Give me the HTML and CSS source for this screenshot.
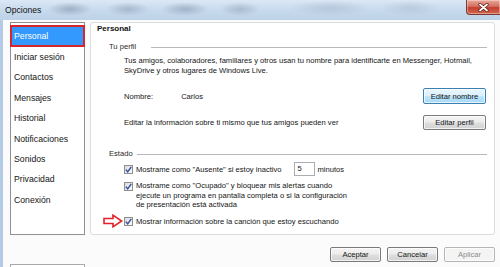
FILE: index.html
```html
<!DOCTYPE html>
<html lang="es">
<head>
<meta charset="utf-8">
<title>Opciones</title>
<link rel="stylesheet" href="styles.css">
</head>
<body>
<div class="window">
  <header class="titlebar">
    <span class="title">Opciones</span>
    <button class="close" aria-label="Cerrar">
      <svg width="11" height="9" viewBox="0 0 11 9"><path d="M2 1.5 L9 7.5 M9 1.5 L2 7.5" stroke="#5a1a14" stroke-width="3.2" stroke-linecap="round"/><path d="M2 1.5 L9 7.5 M9 1.5 L2 7.5" stroke="#fff" stroke-width="1.8" stroke-linecap="round"/></svg>
    </button>
  </header>
  <div class="client">
    <div class="main">
      <ul class="nav">
        <li class="selected">Personal</li>
        <li>Iniciar sesión</li>
        <li>Contactos</li>
        <li>Mensajes</li>
        <li>Historial</li>
        <li>Notificaciones</li>
        <li>Sonidos</li>
        <li>Privacidad</li>
        <li>Conexión</li>
      </ul>
      <section class="panel">
        <h1 class="panel-title">Personal</h1>
        <div class="group-label group-perfil"><span>Tu perfil</span></div>
        <p class="desc">Tus amigos, colaboradores, familiares y otros usan tu nombre para identificarte en Messenger, Hotmail,<br>SkyDrive y otros lugares de Windows Live.</p>
        <div class="row row-name">
          <span class="label">Nombre:</span>
          <span class="value">Carlos</span>
          <button class="btn btn-focus">Editar nombre</button>
        </div>
        <div class="row row-info">
          <span>Editar la información sobre ti mismo que tus amigos pueden ver</span>
          <button class="btn">Editar perfil</button>
        </div>
        <div class="group-label group-estado"><span>Estado</span></div>
        <div class="check-row row-away">
          <span class="check"><svg width="7" height="7" viewBox="0 0 7 7"><path d="M0.8 3.6 L2.7 5.8 L6.3 0.9" fill="none" stroke="#2f4f9e" stroke-width="1.4"/></svg></span>
          <span>Mostrame como &quot;Ausente&quot; si estoy inactivo</span>
          <span class="num">5</span>
          <span>minutos</span>
        </div>
        <div class="check-row row-busy">
          <span class="check"><svg width="7" height="7" viewBox="0 0 7 7"><path d="M0.8 3.6 L2.7 5.8 L6.3 0.9" fill="none" stroke="#2f4f9e" stroke-width="1.4"/></svg></span>
          <span>Mostrame como &quot;Ocupado&quot; y bloquear mis alertas cuando<br>ejecute un programa en pantalla completa o si la configuración<br>de presentación está activada</span>
        </div>
        <div class="check-row row-music">
          <svg class="arrow" width="20" height="14" viewBox="0 0 20 14"><path d="M1 4.5 H10 V1.2 L18.6 7 L10 12.8 V9.5 H1 Z" fill="#fff" stroke="#e3202a" stroke-width="1.6" stroke-linejoin="miter"/></svg>
          <span class="check"><svg width="7" height="7" viewBox="0 0 7 7"><path d="M0.8 3.6 L2.7 5.8 L6.3 0.9" fill="none" stroke="#2f4f9e" stroke-width="1.4"/></svg></span>
          <span>Mostrar información sobre la canción que estoy escuchando</span>
        </div>
      </section>
    </div>
    <div class="actions">
      <button class="btn">Aceptar</button>
      <button class="btn">Cancelar</button>
      <button class="btn btn-disabled">Aplicar</button>
    </div>
    <div class="nav-next"></div>
  </div>
</div>
</body>
</html>
```
FILE: styles.css
```css
html, body {
  margin: 0;
  padding: 0;
}
body {
  width: 500px;
  height: 267px;
  overflow: hidden;
  font-family: "Liberation Sans", Arial, sans-serif;
  font-size: 7.6px;
  color: #141414;
  background: #fbfbfb;
}
.window {
  display: flex;
  flex-direction: column;
  height: 267px;
}
.titlebar {
  height: 20px;
  flex: none;
  display: flex;
  align-items: flex-start;
  background:
    radial-gradient(ellipse 22px 7px at 70px 9px, rgba(120,140,165,0.55), transparent),
    radial-gradient(ellipse 22px 7px at 128px 9px, rgba(120,140,165,0.45), transparent),
    radial-gradient(ellipse 24px 7px at 185px 9px, rgba(120,140,165,0.5), transparent),
    radial-gradient(ellipse 20px 7px at 240px 9px, rgba(120,140,165,0.4), transparent),
    radial-gradient(ellipse 40px 8px at 330px 8px, rgba(140,160,185,0.35), transparent),
    radial-gradient(ellipse 30px 8px at 410px 8px, rgba(140,160,185,0.3), transparent),
    linear-gradient(#dbe7f4, #c5d8ec 60%, #bdd2e8);
}
.title {
  font-size: 8.6px;
  line-height: 20px;
  padding-left: 5px;
  color: #111;
}
.close {
  margin-left: auto;
  width: 34px;
  height: 15px;
  padding: 0;
  border: 1px solid #7a3a32;
  border-top: none;
  border-right: none;
  border-radius: 0 0 0 4px;
  background: linear-gradient(#e9a99a, #d47060 45%, #c2402f 55%, #d4684f);
  display: flex;
  align-items: center;
  justify-content: center;
  box-shadow: inset 0 0 0 1px rgba(255,255,255,0.35);
}
.client {
  flex: 1;
  display: flex;
  flex-direction: column;
  border-left: 3px solid #b3cbe6;
  padding: 2px 5px 0 7px;
  background: #fbfbfb;
}
.main {
  display: flex;
  gap: 5px;
  height: 213px;
  flex: none;
}
.nav {
  width: 75px;
  box-sizing: border-box;
  margin: 0;
  padding: 2px 0 0;
  list-style: none;
  border: 1px solid #8d9094;
  background: #fff;
  font-size: 8.7px;
}
.nav li {
  height: 20.4px;
  line-height: 20.4px;
  padding-left: 3px;
  color: #141414;
  white-space: nowrap;
}
.nav li.selected {
  box-sizing: border-box;
  height: 22px;
  line-height: 18px;
  margin: 0 -1px;
  padding-left: 2px;
  border: 2px solid #d6252d;
  background: #3399ff;
  color: #fff;
}
.panel {
  flex: 1;
  box-sizing: border-box;
  border: 1px solid #dcdcdc;
  border-radius: 3px;
  background: #fff;
  padding: 1px 7px 0 6px;
}
.panel-title {
  margin: 0;
  font-size: 8px;
  font-weight: bold;
  line-height: 10px;
  color: #111;
}
.group-label {
  display: flex;
  align-items: center;
  gap: 4px;
  margin-left: 12px;
  line-height: 10px;
  color: #2a2a2a;
}
.group-label::after {
  content: "";
  flex: 1;
  border-top: 1px solid #b9b9b9;
}
.group-perfil {
  margin-top: 8px;
  gap: 15px;
}
.group-estado {
  margin-top: 19px;
}
.desc {
  margin: 4px 0 0 27px;
  line-height: 9.5px;
}
.row {
  display: flex;
  align-items: center;
  margin-left: 27px;
  padding-right: 1px;
}
.row .btn {
  margin-left: auto;
  width: 63px;
}
.row-name {
  margin-top: 13px;
  height: 16px;
}
.row-name .btn {
  height: 16px;
}
.row-name .value {
  margin-left: 28px;
}
.row-info {
  margin-top: 11px;
  height: 15px;
}
.btn {
  box-sizing: border-box;
  height: 15px;
  padding: 0;
  font-family: inherit;
  font-size: 7.6px;
  color: #141414;
  border: 1px solid #7a7a7a;
  border-radius: 2px;
  background: linear-gradient(#f4f4f4, #ececec 48%, #dedede 52%, #d2d2d2);
  box-shadow: inset 0 0 0 1px rgba(255,255,255,0.7);
}
.btn-focus {
  border-color: #3c7fb1;
  background: linear-gradient(#eaf6fd, #d9f0fc 48%, #bee6fd 52%, #a7d9f5);
}
.btn-disabled {
  color: #8c8c8c;
  border-color: #b5b5b5;
  background: #f4f4f4;
}
.check-row {
  display: flex;
  align-items: center;
  margin-left: 27px;
  gap: 3px;
}
.check {
  box-sizing: border-box;
  width: 9px;
  height: 9px;
  flex: none;
  border: 1px solid #8f8f8f;
  background: linear-gradient(135deg, #dcdcdc, #fafafa);
  display: flex;
  align-items: center;
  justify-content: center;
}
.row-away {
  margin-top: 3px;
  height: 14px;
}
.num {
  box-sizing: border-box;
  width: 21px;
  height: 14px;
  margin-left: 9px;
  padding-left: 3px;
  line-height: 12px;
  border: 1px solid #abadb3;
  background: #fff;
}
.row-busy {
  margin-top: 5px;
  align-items: flex-start;
  line-height: 9.5px;
}
.row-busy .check {
  margin-top: 0.5px;
}
.row-music {
  margin-top: 6.5px;
  margin-left: 6px;
  height: 10px;
  gap: 1px;
}
.row-music .check {
  margin-right: 2px;
}
.arrow {
  flex: none;
}
.actions {
  display: flex;
  justify-content: flex-end;
  gap: 6px;
  margin-top: 12px;
  flex: none;
}
.actions .btn {
  width: 51px;
}
.nav-next {
  margin-top: 2px;
  width: 75px;
  height: 12px;
  flex: none;
  box-sizing: border-box;
  border: 1px solid #a8abae;
  border-bottom: none;
  background: #fff;
}
```
